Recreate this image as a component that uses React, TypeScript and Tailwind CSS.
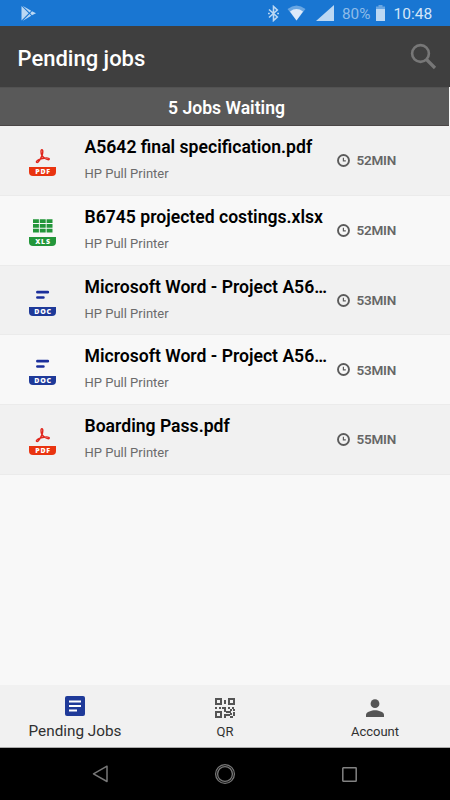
import React from 'react';

type FileKind = 'pdf' | 'xls' | 'doc';

interface Job {
    id: number;
    name: string;
    printer: string;
    minutes: number;
    kind: FileKind;
}

const jobs: Job[] = [
    { id: 1, name: 'A5642 final specification.pdf', printer: 'HP Pull Printer', minutes: 52, kind: 'pdf' },
    { id: 2, name: 'B6745 projected costings.xlsx', printer: 'HP Pull Printer', minutes: 52, kind: 'xls' },
    { id: 3, name: 'Microsoft Word - Project A56…', printer: 'HP Pull Printer', minutes: 53, kind: 'doc' },
    { id: 4, name: 'Microsoft Word - Project A56…', printer: 'HP Pull Printer', minutes: 53, kind: 'doc' },
    { id: 5, name: 'Boarding Pass.pdf', printer: 'HP Pull Printer', minutes: 55, kind: 'pdf' },
];

const badgeColors: Record<FileKind, string> = {
    pdf: 'bg-[#e93410]',
    xls: 'bg-[#23963a]',
    doc: 'bg-[#1f3a99]',
};

const FileGlyph: React.FC<{ kind: FileKind }> = ({ kind }) => {
    if (kind === 'pdf') {
        return (
            <svg className="w-[27px] h-[19px]" viewBox="0 0 27 19" fill="none" stroke="#e0261c" strokeWidth="1.4" strokeLinecap="round" strokeLinejoin="round">
                <path d="M12.900 7.500C11.800 5 11.600 1.600 12.900 1.600S14 5 13 7.500C12 10 10.500 12.600 9.200 14c-1 1-2.200.4-1.700-.5.7-1.300 3.700-2.600 7.500-3.200 3-.5 5.400-.3 5.300.7-.1 1.100-2.400.8-4.200-.5-1.300-.9-2.400-1.900-3.200-3Z" />
            </svg>
        );
    }
    if (kind === 'xls') {
        return (
            <svg className="w-[27px] h-[19px]" viewBox="0 0 27 19" fill="#23963a">
                <path d="M4 1.300h5.900v3.800H4zM10.800 1.300h5.900v3.800h-5.900zM17.600 1.300h5.900v3.800h-5.900zM4 6h5.900v3.800H4zM10.800 6h5.900v3.800h-5.900zM17.600 6h5.900v3.800h-5.900zM4 10.700h5.900v3.800H4zM10.800 10.700h5.900v3.800h-5.900zM17.600 10.700h5.900v3.800h-5.900z" />
            </svg>
        );
    }
    return (
        <svg className="w-[27px] h-[19px]" viewBox="0 0 27 19" fill="none" stroke="#1b2f9b" strokeWidth="2.700" strokeLinecap="round">
            <path d="M8.400 4.200h10.400M8.400 9.500h6" />
        </svg>
    );
};

const FileIcon: React.FC<{ kind: FileKind }> = ({ kind }) => (
    <div className="w-[27px] shrink-0">
        <FileGlyph kind={kind} />
        <div
            className={`h-[9px] rounded-b-[4px] pl-px text-center font-['Open_Sans',sans-serif] text-[7px] font-extrabold leading-[9px] tracking-[0.7px] text-white ${badgeColors[kind]}`}
        >
            {kind.toUpperCase()}
        </div>
    </div>
);

const ClockIcon = () => (
    <svg className="w-[13px] h-[13px]" viewBox="0 0 13 13" fill="none" stroke="#5c5c5c">
        <circle cx="6.500" cy="6.500" r="5.500" strokeWidth="1.900" />
        <path d="M6.400 3.700v3.100h2.400" strokeWidth="1.200" />
    </svg>
);

const JobRow: React.FC<{ job: Job }> = ({ job }) => (
    <li className="flex h-[69.750px] pl-[29px] odd:bg-[#f1f1f1] even:bg-[#f8f8f8] border-b border-[#ebebeb]">
        <div className="pt-[22px]">
            <FileIcon kind={job.kind} />
        </div>
        <div className="ml-[28.500px] w-[244px] shrink-0 pt-[9px]">
            <p className="whitespace-nowrap text-[17.600px] leading-6 font-semibold text-black">{job.name}</p>
            <p className="mt-[5px] text-[13px] leading-5 text-[#6b6b6b]">{job.printer}</p>
        </div>
        <div className="ml-[8.500px] flex h-[69px] items-center gap-[6.500px]">
            <ClockIcon />
            <span className="text-[13.500px] font-semibold tracking-[-0.25px] text-[#666]">{job.minutes}MIN</span>
        </div>
    </li>
);

const StatusBar = () => (
    <div className="flex h-[26px] items-center bg-[#1976d2] text-[#bcd8f3]">
        <svg className="ml-[21px] w-4 h-[17px]" viewBox="0 0 16 17" fill="currentColor">
            <path d="M.5 1v14.500L7.700 8.200zM1.500.700l7 6.700 1.700-1.700zM1.500 16l7-6.900 1.700 1.700zM11 6.200 9.200 8.200 11 10.300l4-2.100z" />
        </svg>
        <svg className="ml-[231px] w-[11px] h-[17px]" viewBox="0 0 11 17" fill="none" stroke="currentColor" strokeWidth="1.600">
            <path d="M1 4.500 9.300 12 5.500 15.500V1.500L9.300 5 1 12.500" />
            <path d="M0 8.500h1.800M9.200 8.500H11" />
        </svg>
        <svg className="ml-[8px] w-[19px] h-[16px]" viewBox="0 0 19 16" fill="currentColor">
            <path opacity=".5" d="M.5 4Q9.500-3 18.500 4L9.500 15.500z" />
            <path className="text-[#dceafa]" d="M3 6.500Q9.500 1.700 16 6.500L9.500 15.500z" />
        </svg>
        <svg className="ml-[10px] w-[18px] h-[16px]" viewBox="0 0 18 16" fill="currentColor">
            <path d="M18 0v16H0z" />
        </svg>
        <span className="ml-[8px] w-[28px] whitespace-nowrap pt-[2px] text-[15.300px] text-[#8ebce9]">80%</span>
        <svg className="ml-[6px] w-[9px] h-[16px]" viewBox="0 0 9 16" fill="currentColor">
            <path opacity=".5" d="M2.500 0h4v1.500H9V4H0V1.500h2.500z" />
            <path d="M0 4h9v12H0z" />
        </svg>
        <span className="ml-[8.500px] pt-[3px] text-[15.500px] text-[#d4e6f8]">10:48</span>
    </div>
);

const QrIcon = () => (
    <svg className="w-5 h-5" viewBox="0 0 20 20" fill="#555">
        <path fillRule="evenodd" d="M0 0h7v7H0zM2 2v3h3V2zM13 0h7v7h-7zM15 2v3h3V2zM0 13h7v7H0zM2 15v3h3v-3z" />
        <path d="M9 2h2v4H9zM0 9h2v2H0zM4 9h2v2H4zM7 9h4v2H7zM9 11h2v3H9zM11 13h3v2h-3zM13 9h2v2h-2zM17 9h2v2h-2zM15 11h2v2h-2zM18 11h2v2h-2zM9 16h2v4H9zM11 16h4v2h-4zM14 13h2v2h-2zM18 14h2v4h-2zM15 18h3v2h-3zM15 15h2v2h-2z" />
    </svg>
);

const TabBar = () => (
    <div className="grid h-[63px] grid-cols-3 bg-[#f1f1f1] text-[#303030] border-b border-[#ababab]">
        <div className="flex flex-col items-center pt-[11px]">
            <svg className="w-5 h-5" viewBox="0 0 20 20">
                <rect width="20" height="20" rx="2" fill="#1f3a99" />
                <path d="M4 5.500h12M4 10h12M4 14.500h8" stroke="#fff" strokeWidth="2" />
            </svg>
            <span className="mt-[3px] text-[15.300px] leading-6">Pending Jobs</span>
        </div>
        <div className="flex flex-col items-center pt-[13px]">
            <QrIcon />
            <span className="mt-[4px] text-[13px] leading-5">QR</span>
        </div>
        <div className="flex flex-col items-center pt-[13px]">
            <svg className="w-5 h-5" viewBox="0 0 20 20" fill="#555">
                <circle cx="10" cy="5.700" r="4.400" />
                <path d="M1 19v-2.200c0-3 6-4.600 9-4.600s9 1.600 9 4.600V19z" />
            </svg>
            <span className="mt-[4px] text-[13px] leading-5">Account</span>
        </div>
    </div>
);

const SystemNav = () => (
    <div className="flex h-[52px] items-center bg-black">
        <svg className="ml-[92px] w-4 h-[18px]" viewBox="0 0 16 18" fill="none" stroke="#777" strokeWidth="1.500" strokeLinejoin="round">
            <path d="M15 1.200v15.300L1.500 8.900z" />
        </svg>
        <svg className="ml-[106px] w-[22px] h-[22px]" viewBox="0 0 22 22" fill="none" stroke="#777">
            <circle cx="11" cy="11" r="9.400" strokeWidth="1.300" />
            <circle cx="11" cy="11" r="7.400" strokeWidth="1.300" />
        </svg>
        <svg className="ml-[106px] w-[15px] h-[15px]" viewBox="0 0 15 15" fill="none" stroke="#828282" strokeWidth="1.500">
            <rect x=".8" y=".8" width="13.400" height="13.400" rx=".5" />
        </svg>
    </div>
);

const App: React.FC = () => {
    return (
        <div className="flex h-[800px] w-[450px] flex-col overflow-hidden bg-[#f8f8f8] font-[Roboto,sans-serif]">
            <StatusBar />
            <header className="flex h-[61px] items-center justify-between bg-[#3f3f3f] pl-[17.500px] pr-[13px]">
                <h1 className="pt-[3px] text-[22px] font-medium text-white">Pending jobs</h1>
                <svg className="w-[27px] h-[27px]" viewBox="0 0 27 27" fill="none" stroke="#777">
                    <circle cx="10.500" cy="10.500" r="8.400" strokeWidth="2.600" />
                    <path d="m16.500 16.500 8.500 8.500" strokeWidth="3.200" />
                </svg>
            </header>
            <div className="mr-px flex h-[39px] items-center justify-center bg-[#595959] pt-[4px] pl-[4px] text-[17.600px] font-semibold text-white border-t border-b border-t-[#525252] border-b-[#4a4646]">
                5 Jobs Waiting
            </div>
            <ul>
                {jobs.map((job) => (
                    <JobRow key={job.id} job={job} />
                ))}
            </ul>
            <div className="grow" />
            <TabBar />
            <SystemNav />
        </div>
    );
};

export default App;
